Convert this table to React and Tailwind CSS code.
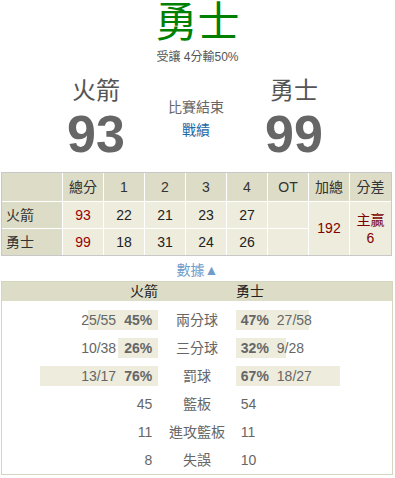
const FONT = { fontFamily: '"Liberation Sans", "Noto Sans CJK TC", sans-serif' };

const QUARTERS = [
  { team: '火箭', total: 93, q: [22, 21, 23, 27] },
  { team: '勇士', total: 99, q: [18, 31, 24, 26] },
];

const STATS = [
  { label: '兩分球', l: '25/55', lp: 45, r: '27/58', rp: 47 },
  { label: '三分球', l: '10/38', lp: 26, r: '9/28', rp: 32 },
  { label: '罰球', l: '13/17', lp: 76, r: '18/27', rp: 67 },
  { label: '籃板', l: '45', r: '54' },
  { label: '進攻籃板', l: '11', r: '11' },
  { label: '失誤', l: '8', r: '10' },
];

function Head({ children, className = '' }) {
  return (
    <div className={`bg-[#dddcc6] flex items-center justify-center text-[14px] text-[#333] ${className}`}>
      {children}
    </div>
  );
}

function Cell({ children, className = '' }) {
  return (
    <div className={`bg-[#edecdd] flex items-center justify-center text-[14px] text-[#222] ${className}`}>
      {children}
    </div>
  );
}

function StatRow({ s }) {
  return (
    <div className="flex h-[28px] items-center text-[14px] text-[#666]">
      <div className="relative w-[157px] h-[20px] flex items-center justify-end pr-[6px]">
        {s.lp != null && (
          <div className="absolute right-0 top-0 h-full bg-[#edecdd]" style={{ width: `${s.lp}%` }} />
        )}
        <span className="relative">{s.l}</span>
        {s.lp != null && <span className="relative font-bold ml-[8px]">{s.lp}%</span>}
      </div>
      <div className="w-[78px] text-center">{s.label}</div>
      <div className="relative w-[157px] h-[20px] flex items-center pl-[5px]">
        {s.rp != null && (
          <div className="absolute left-0 top-0 h-full bg-[#edecdd]" style={{ width: `${s.rp}%` }} />
        )}
        {s.rp != null && <span className="relative font-bold mr-[8px]">{s.rp}%</span>}
        <span className="relative">{s.r}</span>
      </div>
    </div>
  );
}

export default function App() {
  return (
    <div className="w-[395px] h-[478px] bg-white overflow-hidden" style={FONT}>
      <div className="text-center text-[42px] leading-[46px] text-[#008000]">勇士</div>
      <div className="mt-[3px] text-center text-[12px] leading-[16px] text-[#555]">受讓 4分輸50%</div>

      <div className="mt-[12px] pl-[36px] grid grid-cols-[120px_80px_116px]">
        <div className="flex flex-col items-center">
          <div className="text-[24px] leading-[28px] text-[#555]">火箭</div>
          <div className="mt-[3px] text-[52px] leading-[52px] font-bold text-[#666]">93</div>
        </div>
        <div className="flex flex-col items-center pt-[20px] text-[14px] leading-[20px]">
          <div className="text-[#666]">比賽結束</div>
          <div className="mt-[3px] text-[#1a6aa8]">戰績</div>
        </div>
        <div className="flex flex-col items-center">
          <div className="text-[24px] leading-[28px] text-[#555]">勇士</div>
          <div className="mt-[3px] text-[52px] leading-[52px] font-bold text-[#666]">99</div>
        </div>
      </div>

      <div className="mt-[12px] ml-[1px] w-[391px] border border-[#c8c8c8] bg-white grid grid-cols-[60px_repeat(7,40px)_1fr] grid-rows-[28px_26px_26px] gap-px">
        <Head />
        <Head>總分</Head>
        <Head>1</Head>
        <Head>2</Head>
        <Head>3</Head>
        <Head>4</Head>
        <Head>OT</Head>
        <Head>加總</Head>
        <Head>分差</Head>
        {QUARTERS.map((t, i) => (
          <>
            <Head key={`n${i}`} className="justify-start pl-[4px] text-[#111]">{t.team}</Head>
            <Cell key={`t${i}`} className="text-[#990000]">{t.total}</Cell>
            {t.q.map((v, j) => (
              <Cell key={`q${i}${j}`}>{v}</Cell>
            ))}
            <Cell key={`o${i}`} />
            {i === 0 && (
              <>
                <Cell key="sum" className="row-span-2 text-[#800000]">192</Cell>
                <Cell key="diff" className="row-span-2 flex-col leading-[18px] text-[#800000]">
                  <span>主贏</span>
                  <span>6</span>
                </Cell>
              </>
            )}
          </>
        ))}
      </div>

      <div className="mt-[4px] text-center text-[14px] leading-[20px] text-[#6f9ccc]">數據▲</div>

      <div className="mt-[1px] ml-[1px] w-[392px] border border-[#d6d6bf]">
        <div className="flex h-[19px] items-center bg-[#dddcc6] text-[14px] text-[#222]">
          <div className="w-[156px] text-right">火箭</div>
          <div className="w-[78px]" />
          <div>勇士</div>
        </div>
        <div className="pt-[5px]">
          {STATS.map((s) => (
            <StatRow key={s.label} s={s} />
          ))}
        </div>
      </div>
    </div>
  );
}
